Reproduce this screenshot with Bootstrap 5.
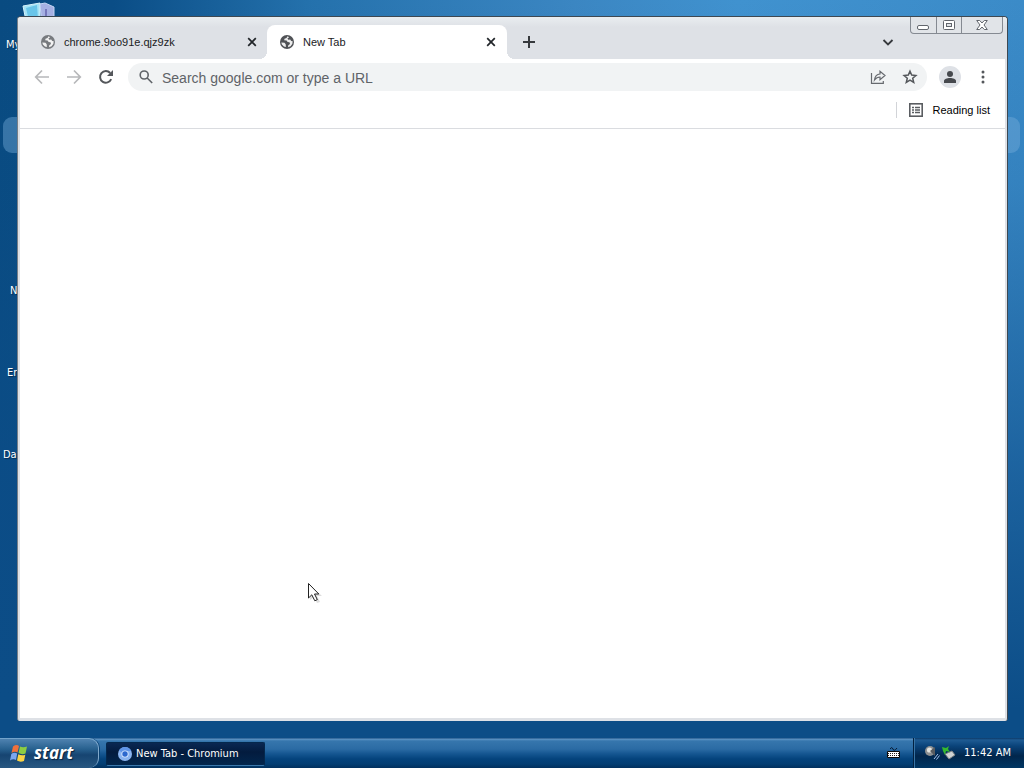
<!DOCTYPE html>
<html lang="en">
<head>
<meta charset="utf-8">
<meta name="viewport" content="width=device-width, initial-scale=1">
<title>New Tab - Chromium</title>
<link href="https://cdn.jsdelivr.net/npm/bootstrap@5.3.0/dist/css/bootstrap.min.css" rel="stylesheet">
<style>
  body { font-family: "Liberation Sans", Arial, sans-serif; font-size: 11px; line-height: 16px; color: #202124; cursor: default; }
  svg { display: block; flex: none; }
  button { color: inherit; }
  .desktop { padding: 16px 16px 17px 17px; background: linear-gradient(180deg, rgba(10,72,128,0) 0%, rgba(12,77,137,.15) 25%, rgba(12,77,137,.7) 68%, #0c4d87 96%), linear-gradient(90deg, #094b81 0%, #0a4d86 11%, #2471ac 30%, #3b86c2 56%, #4092cf 72%, #3b8bc8 100%); }
  .shortcut { font-family: "DejaVu Sans Condensed", "DejaVu Sans", sans-serif; font-size: 11px; color: #fff; text-shadow: 1px 1px 1px #022a50; text-decoration: none; }
  .glow { top: 117px; left: 3px; right: 4px; height: 36px; border-radius: 9px; background: rgba(120,175,220,.42); }
  .browser { background: #fff; border: 1px solid #3d4852; border-left-color: #777f88; border-bottom: 0; border-radius: 4px 4px 3px 3px; box-shadow: inset 2px 0 #dee1e6, inset -2px 0 #dee1e6, inset 0 -3px #dee1e6; }
  .tabstrip { height: 42px; padding: 8px 0 0 9px; background: linear-gradient(#e9edf0, #dee1e6 10px); border-radius: 3px 3px 0 0; }
  .browser-tab { width: 240px; height: 34px; padding: 0 11px 0 13px; gap: 8px; }
  .browser-tab:not(.open) { padding-right: 10px; }
  .browser-tab.open { background: #fff; border-radius: 8px 8px 0 0; padding-left: 12px; }
  .browser-tab.open::before, .browser-tab.open::after { content: ""; position: absolute; bottom: 0; width: 8px; height: 8px; }
  .browser-tab.open::before { left: -8px; background: radial-gradient(circle at 0 0, transparent 8px, #fff 8px); }
  .browser-tab.open::after { right: -8px; background: radial-gradient(circle at 100% 0, transparent 8px, #fff 8px); }
  .caption { top: 0; right: 4px; border: 1px solid #858a92; border-top: 0; border-radius: 0 0 4px 4px; background: #e1e4e8; height: 17px; overflow: hidden; }
  .caption button { width: 25px; }
  .caption button + button { border-left: 1px solid #858a92 !important; }
  .caption button:last-child { width: 41px; }
  .chevron { right: 113px; top: 18px; }
  .toolbar { height: 36px; padding: 0 16px 0 16px; color: #5f6368; }
  .toolbar .nav-tool { width: 16px; margin-right: 16px; }
  .toolbar .nav-tool:nth-child(3) { margin-right: 14px; }
  .omnibox { height: 28px; border-radius: 14px; background: #f1f3f4; padding: 0 9px 0 10px; }
  .omnibox input { font-size: 14px; line-height: 20px; color: #5f6368; outline: 0; margin-left: 8px; padding-top: 2px !important; }
  .omnibox input::placeholder { color: #5f6368; opacity: 1; }
  .omnibox button { margin-left: 16px; }
  .avatar { width: 22px; height: 22px; border-radius: 50%; background: #dee1e6; margin: 0 14px 0 12px; }
  .bookmarks { height: 34px; margin: 0 2px; padding: 0 15px 3px; border-bottom: 1px solid #dadce0; }
  .bookmarks button { border-left: 1px solid #d2d4d8 !important; height: 16px; font-size: 11px; gap: 10px; color: #000; }
  .pointer { left: 308px; top: 582px; }
  .taskbar { height: 30px; font-family: "DejaVu Sans Condensed", "DejaVu Sans", sans-serif; font-size: 11px; color: #fff; background: linear-gradient(#11457a 0, #6096c6 1px, #3676ad 3px, #2b6ba4 11px, #145590 16px, #04437c 21px, #033e73 26px, #01305e 30px); }
  .start { width: 99px; padding: 0 0 2px 9px; gap: 5px; font: italic bold 17px/24px "Open Sans", sans-serif; border-top: 1px solid #73a3cb !important; border-right: 1px solid #80a8cb !important; border-radius: 0 10px 10px 0; background: linear-gradient(#4f82b0, #28618f 10px, #164471 16px, #275680 28px); text-shadow: 1px 1px 1px #08213e; box-shadow: 1px 0 #0b4375; }
  .task { width: 159px; height: 24px; margin: 4px 0 0 7px; padding: 0 0 0 10px; gap: 3px; font-size: 11px; border: 1px solid #04284d !important; border-bottom-color: #3b78ab !important; border-radius: 2px; background: linear-gradient(#0a2852, #031b3e 9px, #02264d); }
  .tray { border-left: 1px solid #02203f; box-shadow: inset 1px 0 #3874a5; padding: 0 13px 0 10px; background: linear-gradient(#0d3a69 0, #1e5b93 2px, #0a437a 8px, #01264c 18px, #003663 30px); }
  .keyboard { margin: 8px 12px 0 auto; }
</style>
</head>
<body class="vh-100 d-flex flex-column overflow-hidden">
<svg class="d-none">
  <symbol id="globe" viewBox="0 0 16 16"><circle cx="8" cy="8" r="7" fill="currentColor"/><path d="M2.300 8.500l3.200.3 1.200 1.400.2 2.900-2-.7-2-2zM8.500 2.300l-1 1.600-2 .9-.3 1.500 2.400.3 1 1.500 1.900.2.500 1.700-1.700 1.300-.3 1.900 2.600-1 1.800-2.500.3-2.500-1.500-.1-1-1.500-1.900.2-.9-1.200 1.700-1.300z" fill="#fff" fill-opacity=".9"/></symbol>
  <symbol id="cross" viewBox="0 0 10 10"><path d="M1.200 1.200l7.600 7.600m0-7.600L1.200 8.800" stroke="currentColor" stroke-width="1.700"/></symbol>
</svg>

<main class="desktop position-relative flex-grow-1 d-flex">
  <div class="glow position-absolute"></div>
  <svg class="position-absolute" style="left:22px;top:2px" width="34" height="24" viewBox="0 0 34 24"><path d="M1 4L18 1v23H5z" fill="#a5e3f6" stroke="#d5f2fb"/><path d="M4 6l11-3 1 14-9 2z" fill="#69c5e9"/><path d="M18 2l5-1 9 4v19H20z" fill="#a5b0e3" stroke="#c3d5f4"/><path d="M24 7v15" stroke="#7477bb" stroke-width="2"/></svg>
  <a href="#" class="shortcut position-absolute" style="left:6px;top:37px">My</a>
  <a href="#" class="shortcut position-absolute" style="left:10px;top:283px">N</a>
  <a href="#" class="shortcut position-absolute" style="left:7px;top:365px">Er</a>
  <a href="#" class="shortcut position-absolute" style="left:3px;top:447px">Da</a>

  <section class="browser position-relative flex-grow-1 d-flex flex-column">
    <header class="tabstrip d-flex">
      <div class="browser-tab d-flex align-items-center">
        <svg width="16" height="16" color="#777a7e"><use href="#globe"/></svg>
        <span class="flex-grow-1">chrome.9oo91e.qjz9zk</span>
        <button class="btn p-0 border-0" aria-label="Close tab"><svg width="10" height="10"><use href="#cross"/></svg></button>
      </div>
      <div class="browser-tab open position-relative d-flex align-items-center">
        <svg width="16" height="16" color="#505256"><use href="#globe"/></svg>
        <span class="flex-grow-1">New Tab</span>
        <button class="btn p-0 border-0" aria-label="Close tab"><svg width="10" height="10"><use href="#cross"/></svg></button>
      </div>
      <button class="btn p-0 border-0 ms-3" aria-label="New tab"><svg width="12" height="12"><path d="M6 0v12M0 6h12" stroke="#36393d" stroke-width="2"/></svg></button>
      <button class="chevron btn p-0 border-0 position-absolute" aria-label="Search tabs"><svg width="12" height="14"><path d="M1.500 5L6 9.500 10.500 5" fill="none" stroke="#36393d" stroke-width="1.800"/></svg></button>
      <div class="caption position-absolute d-flex">
        <button class="btn p-0 border-0 rounded-0 d-flex justify-content-center" aria-label="Minimize"><svg width="13" height="16"><rect x=".5" y="8.500" width="11" height="4" rx="1.500" fill="#fff" stroke="#62666d"/></svg></button>
        <button class="btn p-0 border-0 rounded-0 d-flex justify-content-center" aria-label="Restore"><svg width="12" height="16"><rect x=".5" y="3.500" width="11" height="9" rx="1" fill="#fff" stroke="#62666d"/><rect x="3.500" y="6.500" width="5" height="3" fill="#e1e4e8" stroke="#62666d"/></svg></button>
        <button class="btn p-0 border-0 rounded-0 d-flex justify-content-center" aria-label="Close"><svg width="12" height="16"><path d="M.7 3.500h3L6 6l2.300-2.500h3L8 8l3.300 4.500h-3L6 10l-2.300 2.500h-3L4 8z" fill="#fff" stroke="#62666d"/></svg></button>
      </div>
    </header>

    <nav class="toolbar d-flex align-items-center">
      <button class="nav-tool btn p-0 border-0" aria-label="Back"><svg width="16" height="16"><path d="M15 8H2M8 1.500L1.700 8 8 14.500" fill="none" stroke="#b7b8ba" stroke-width="1.700"/></svg></button>
      <button class="nav-tool btn p-0 border-0" aria-label="Forward"><svg width="16" height="16"><path d="M1 8h13M8 1.500L14.300 8 8 14.500" fill="none" stroke="#b7b8ba" stroke-width="1.700"/></svg></button>
      <button class="nav-tool btn p-0 border-0" aria-label="Reload"><svg width="16" height="16"><path d="M13.200 10.200A5.800 5.800 0 1 1 12.200 4" fill="none" stroke="#54575b" stroke-width="2"/><path d="M15 1v6H9z" fill="#54575b"/></svg></button>
      <div class="omnibox flex-grow-1 d-flex align-items-center">
        <svg width="16" height="16" fill="none" stroke="#5f6368" stroke-width="1.600"><circle cx="6.200" cy="6" r="4"/><path d="M9.200 9l5 5"/></svg>
        <input class="border-0 p-0 bg-transparent flex-grow-1" type="text" aria-label="Address" placeholder="Search google.com or type a URL">
        <button class="btn p-0 border-0" aria-label="Share"><svg width="16" height="16" fill="none" stroke="#66696e" stroke-width="1.200"><path d="M1.500 4v10.300h11.800V12"/><path d="M4.500 11C5 7 7 5.200 10 5V2.200l5 4.300-5 4.200V8C7.500 8 6 9 4.500 11z"/></svg></button>
        <button class="btn p-0 border-0" aria-label="Bookmark this tab"><svg width="16" height="16"><path d="M8 2.200l1.700 3.900 4.200.4-3.200 2.800 1 4.100L8 11.200l-3.700 2.200 1-4.100-3.200-2.800 4.200-.4z" fill="none" stroke="#54575b" stroke-width="1.500"/></svg></button>
      </div>
      <button class="avatar btn p-0 border-0 d-flex align-items-center justify-content-center" aria-label="Profile"><svg width="14" height="14" fill="#46494e"><circle cx="7" cy="4" r="3"/><path d="M1 13v-2c0-2 3-3 6-3s6 1 6 3v2z"/></svg></button>
      <button class="btn p-0 border-0" aria-label="Menu"><svg width="16" height="16" fill="#54575b"><circle cx="8" cy="3" r="1.500"/><circle cx="8" cy="8" r="1.500"/><circle cx="8" cy="13" r="1.500"/></svg></button>
    </nav>

    <div class="bookmarks d-flex align-items-center justify-content-end">
      <button class="btn p-0 border-0 rounded-0 ps-2 d-flex align-items-center"><svg class="ms-1" width="14" height="14"><rect x=".8" y=".8" width="12.400" height="12.400" fill="none" stroke="#5a5d61" stroke-width="1.600"/><path d="M3 4.500h2m1 0h5M3 7h2m1 0h5M3 9.500h2m1 0h5" stroke="#5a5d61" stroke-width="1.400"/></svg>Reading list</button>
    </div>
  </section>

  <svg class="pointer position-absolute" width="16" height="24"><path d="M2 3v15l4-3 3 6 3-1-3-6h5z" fill="#bbb" opacity=".5"/><path d="M.5 1.500v14.500l3.300-3.200 3 6 2.500-1.200-2.800-5.600h4.300z" fill="#fff" stroke="#222"/></svg>
</main>

<footer class="taskbar d-flex flex-shrink-0">
  <button class="start btn border-0 d-flex align-items-center text-white"><svg width="20" height="20" viewBox="0 0 20 20"><path d="M4 3.500q3.500-2.500 6-.5L8.500 9.500Q5.500 8 2.500 10z" fill="#f0713c"/><path d="M11 3.500q3 1.500 7 0l-1.500 7q-3.500 1.500-7-.5z" fill="#8dcd43"/><path d="M2.300 11Q5 9 8.200 10.500L7 17q-3-1.500-6 .5z" fill="#7ca6f0"/><path d="M9.300 11.300q3.500 1.700 7 .4L15 18q-4 1.500-7-.5z" fill="#fbd445"/></svg>start</button>
  <button class="task btn d-flex align-items-center text-white"><svg width="16" height="16"><circle cx="8" cy="8" r="7" fill="#8ab4f0"/><path d="M8 1a7 7 0 0 1 6.300 4H8a3.500 3.500 0 0 0-3 1.500L2 4.500A7 7 0 0 1 8 1z" fill="#5f94e6"/><circle cx="8" cy="8" r="3.600" fill="#dbe9ff"/><circle cx="8" cy="8" r="2.700" fill="#2c68ce"/></svg>New Tab - Chromium</button>
  <svg class="keyboard" width="14" height="16"><path d="M3 3q2-3 3 0t4-1" fill="none" stroke="#061b33"/><path d="M.5 5.500h12v6H.5z" fill="#fff" stroke="#0a0a0a"/><path d="M1 7.500h11M1 9.500h11" stroke="#222" stroke-dasharray="1 1"/></svg>
  <div class="tray d-flex align-items-center">
    <svg width="32" height="18"><circle cx="6" cy="7" r="5" fill="#8d8f91"/><circle cx="5.500" cy="6" r="2.600" fill="#e3e3df"/><path d="M6 7l5-4v9z" fill="#595c60"/><path d="M10 15l4-5M12.500 15.500l3-4" stroke="#a9c5f2"/><path d="M21 10l7-3 3 4-6 4z" fill="#d0d3d3" stroke="#7a8084"/><path d="M18 3l4 1 3-2-1 3 2 3-4-1-1 4-2-4z" fill="#35b82f"/></svg>
    <time class="ms-2">11:42 AM</time>
  </div>
</footer>
<script src="https://cdn.jsdelivr.net/npm/bootstrap@5.3.0/dist/js/bootstrap.bundle.min.js"></script>
</body>
</html>
